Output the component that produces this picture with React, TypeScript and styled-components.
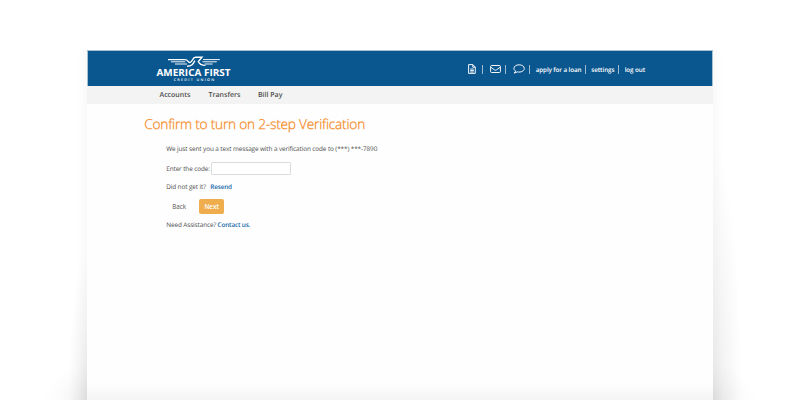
import React from "react";
import styled, { createGlobalStyle } from "styled-components";

const GlobalStyle = createGlobalStyle`
  * { box-sizing: border-box; }
  html, body { margin: 0; padding: 0; background: #fff; overflow: hidden; }
  body { font-family: "Open Sans", "Noto Sans", sans-serif; color: #4c4c4c; text-rendering: geometricPrecision; }
`;

const Stage = styled.div`
  width: 800px;
  height: 400px;
  overflow: hidden;
  display: grid;
  grid-template-columns: 87px 626px 87px;
  padding-top: 50px;
  background: #fff;
`;

const Shade = styled.div<{ $side: "left" | "right" }>`
  background:
    radial-gradient(ellipse 44px 36px at ${p => (p.$side === "left" ? "100%" : "0%")} 100%, rgba(0,0,0,.05), rgba(0,0,0,.016) 60%, transparent),
    radial-gradient(ellipse ${p => (p.$side === "left" ? "19px 150px" : "29px 260px")} at ${p => (p.$side === "left" ? "100%" : "0%")} 100%, rgba(0,0,0,.075), rgba(0,0,0,.03) 55%, transparent),
    linear-gradient(to ${p => p.$side}, rgba(0,0,0,.022), transparent 10px);
`;

const Window = styled.main`
  height: 350px;
  background: linear-gradient(to top, #f4f4f4, #fefefe 16px);
`;

const Header = styled.header`
  height: 36px;
  padding: 0 67.3px 0 67.8px;
  display: flex;
  justify-content: space-between;
  background: #0a568f;
  border: 0 solid #a5c1d5;
  border-width: 1px 1px 0;
  color: #fff;
`;

const Logo = styled.svg`
  width: 76px;
  height: 30px;
  display: block;
  margin-top: 1px;
`;

const Utilities = styled.nav`
  height: 36px;
  display: flex;
  align-items: center;
`;

const Utility = styled.a<{ $width: number }>`
  width: ${p => p.$width}px;
  flex: none;
  font-size: 6.3px;
  letter-spacing: -0.1px;
  font-weight: 600;
  line-height: 11px;
  white-space: nowrap;
  svg { display: block; }
`;

const Divider = styled.span<{ $after: number }>`
  width: 1px;
  height: 9px;
  margin-right: ${p => p.$after}px;
  background: #9dbbd2;
`;

const Tabs = styled.nav`
  height: 17.5px;
  padding-left: 72.5px;
  display: flex;
  background: #f3f3f3;
`;

const Tab = styled.a<{ $width: number }>`
  width: ${p => p.$width}px;
  font-size: 7px;
  font-weight: 600;
  line-height: 19px;
  white-space: nowrap;
`;

const Content = styled.section`
  padding: 12px 0 0 79.2px;
  font-size: 6.4px;
  letter-spacing: -0.1px;
  line-height: 10px;
`;

const Title = styled.h1`
  margin: 0 0 0 -22px;
  height: 18px;
  font-size: 13.7px;
  line-height: 17px;
  font-weight: 300;
  letter-spacing: -0.22px;
  color: #f58a25;
  -webkit-text-stroke: 0.25px #f58a25;
  white-space: nowrap;
`;

const Line = styled.div<{ $top: number; $height?: number }>`
  height: ${p => p.$height ?? 10}px;
  margin-top: ${p => p.$top}px;
  display: flex;
  align-items: center;
  white-space: nowrap;
`;

const CodeInput = styled.input`
  width: 80.5px;
  height: 13px;
  margin: 0 0 0 1px;
  padding: 0 3px;
  border: 1px solid #dcdcdc;
  border-radius: 1px;
  background: #fff;
  font: inherit;
  outline: none;
`;

const Link = styled.a<{ $gap: number }>`
  margin-left: ${p => p.$gap}px;
  letter-spacing: -0.18px;
  color: #1769aa;
  font-weight: 600;
`;

const Button = styled.button<{ $primary?: boolean }>`
  width: ${p => (p.$primary ? 25 : 33)}px;
  height: 15px;
  padding: 0 ${p => (p.$primary ? 0 : 6)}px;
  border: 0;
  border-radius: 2px;
  background: ${p => (p.$primary ? "#f0ad4e" : "transparent")};
  color: ${p => (p.$primary ? "#fff" : "#555")};
  font: ${p => (p.$primary ? 600 : 400)} 6.3px/15px "Open Sans", sans-serif;
  text-align: ${p => (p.$primary ? "center" : "left")};
`;

const icon = { fill: "none", stroke: "#fff", strokeWidth: 0.95, strokeLinejoin: "round" as const };

export default function App() {
  return (
    <>
      <GlobalStyle />
      <Stage>
        <Shade $side="left" />
        <Window>
          <Header>
            <Logo viewBox="156 52 76 30">
              <g fill="none" stroke="#fff">
                <path d="M168 59.6H185C188.5 59.6 187.7 63.1 190.2 62.4C192.7 61.6 192.3 57.3 195.6 57.3H202L198.3 61.6C199.4 64.4 201.3 65.4 205.5 65.4" strokeWidth="1.4" />
                <path d="M187 66.2C191.8 66.2 193.1 64 194.9 60.6" strokeWidth="1.35" />
                <path d="M171 61.8H185.3M175 64H187" strokeWidth=".95" />
                <path d="M203 59.6H219.8M202.5 61.8H216.8M204.7 64H212.6" strokeWidth=".95" />
              </g>
              <text x="156.5" y="75.7" fill="#fff" fontFamily="Open Sans" fontSize="9.8" fontWeight="700" textLength="74" lengthAdjust="spacingAndGlyphs">AMERICA FIRST</text>
              <text x="173.7" y="80.5" fill="#fff" fontFamily="Open Sans" fontSize="3.7" fontWeight="600" textLength="40.5" lengthAdjust="spacing">CREDIT UNION</text>
            </Logo>
            <Utilities>
              <Utility $width={14} aria-label="Documents">
                <svg width="8" height="10" viewBox="0 0 8 10" {...icon}>
                  <path d="M.6.6H4.8L7.3 3.1V9.4H.6ZM4.8.6V3.2H7.3M2.2 5H5.8M2.2 6.5H5.8M2.2 8H5.8" />
                </svg>
              </Utility>
              <Divider $after={7} />
              <Utility $width={15} aria-label="Messages">
                <svg width="11" height="8" viewBox="0 0 11 8" {...icon}>
                  <rect x=".6" y=".5" width="9.8" height="7" rx="1" />
                  <path d="M.8 2.2L4.4 4.8Q5.5 5.7 6.6 4.8L10.2 2.2" />
                </svg>
              </Utility>
              <Divider $after={7} />
              <Utility $width={16} aria-label="Chat">
                <svg width="12" height="10" viewBox="0 0 12 10" {...icon}>
                  <path d="M2.7 7.1L1.2 9.1L4.5 7.9C8 8.6 11.3 6.9 11.3 4.4C11.3 2.3 9 .8 6.1.8C3.2.8.9 2.3.9 4.4C.9 5.5 1.6 6.5 2.7 7.1Z" />
                </svg>
              </Utility>
              <Divider $after={6} />
              <Utility $width={49}>apply for a loan</Utility>
              <Divider $after={5.5} />
              <Utility $width={26.5}>settings</Utility>
              <Divider $after={6} />
              <Utility $width={20}>log out</Utility>
            </Utilities>
          </Header>
          <Tabs>
            <Tab $width={49}>Accounts</Tab>
            <Tab $width={49.5}>Transfers</Tab>
            <Tab $width={30}>Bill Pay</Tab>
          </Tabs>
          <Content>
            <Title>Confirm to turn on 2-step Verification</Title>
            <Line $top={10.5}>We just sent you a text message with a verification code to (***) ***-7890</Line>
            <Line $top={8} $height={13}>
              <label htmlFor="code">Enter the code:</label>
              <CodeInput id="code" />
            </Line>
            <Line $top={6.5}>Did not get it?<Link $gap={4.5}>Resend</Link></Line>
            <Line $top={7} $height={15}>
              <Button>Back</Button>
              <Button $primary>Next</Button>
            </Line>
            <Line $top={6}>Need Assistance?<Link $gap={1.5}>Contact us.</Link></Line>
          </Content>
        </Window>
        <Shade $side="right" />
      </Stage>
    </>
  );
}
